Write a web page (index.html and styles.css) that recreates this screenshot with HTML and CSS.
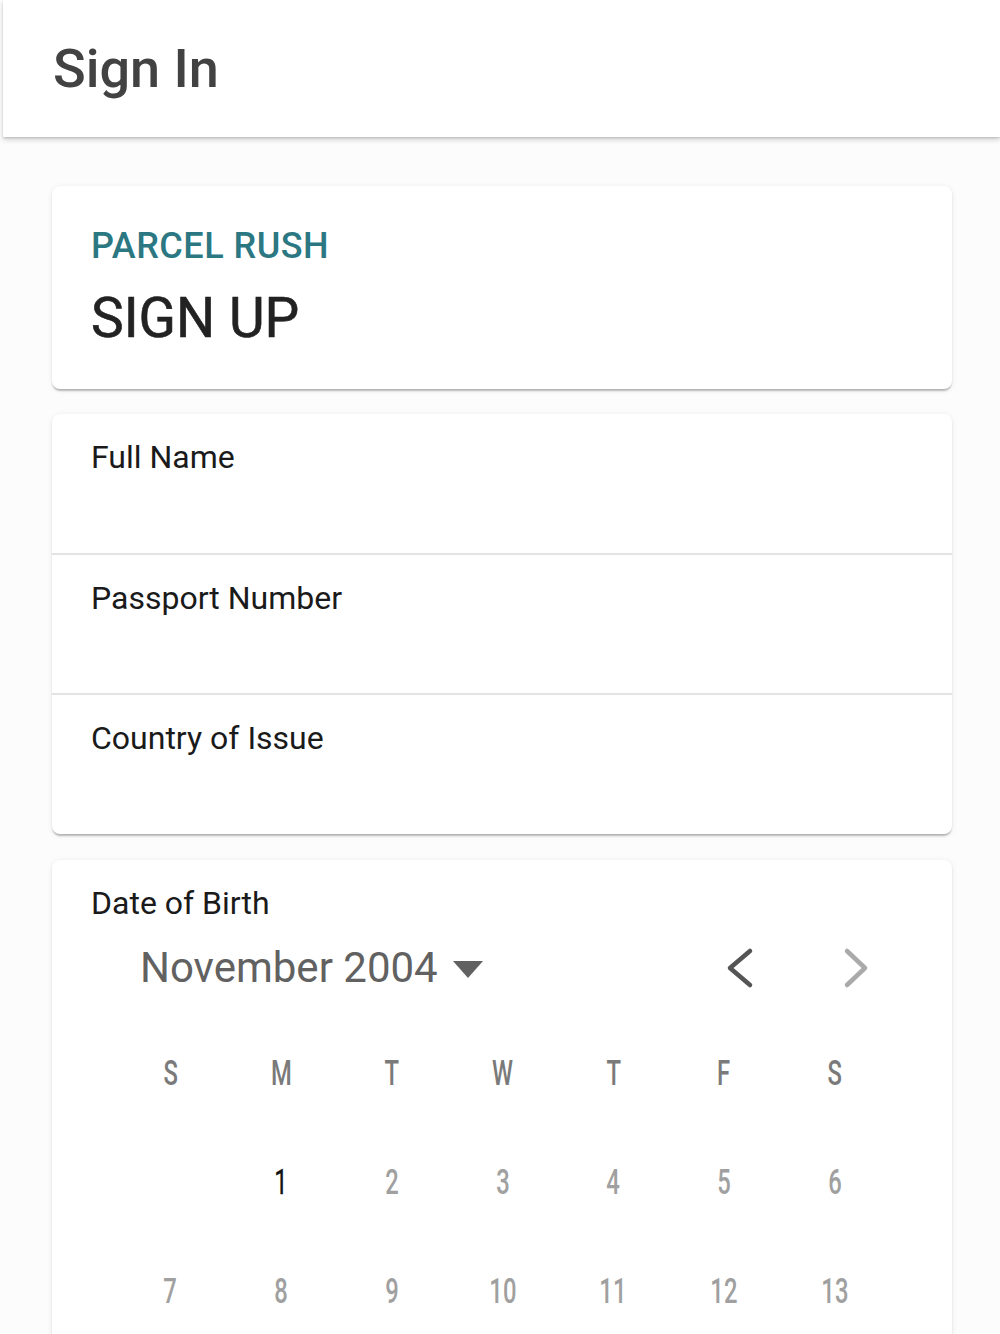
FILE: index.html
```html
<!DOCTYPE html>
<html>
<head>
<meta charset="utf-8">
<link rel="stylesheet" href="styles.css">
</head>
<body>
<header class="appbar"><h1 class="appbar-title">Sign In</h1></header>
<main class="content">
  <section class="card brand-card">
    <div class="brand">PARCEL RUSH</div>
    <div class="page-title">SIGN UP</div>
  </section>
  <section class="card fields-card">
    <div class="field">Full Name</div>
    <div class="field">Passport Number</div>
    <div class="field">Country of Issue</div>
  </section>
  <section class="card date-card">
    <div class="field-label">Date of Birth</div>
    <div class="cal-head">
      <div class="month">November 2004 <span class="caret"></span></div>
      <div class="nav">
        <button class="nav-btn">
          <svg width="48" height="48" viewBox="0 0 48 48"><polyline points="34,7 14,24 34,41" fill="none" stroke="#555" stroke-width="4.5" stroke-linecap="round" stroke-linejoin="round"/></svg>
        </button>
        <button class="nav-btn">
          <svg width="48" height="48" viewBox="0 0 48 48"><polyline points="16,7 34,24 16,41" fill="none" stroke="#aaa" stroke-width="4.5" stroke-linecap="round" stroke-linejoin="round"/></svg>
        </button>
      </div>
    </div>
    <div class="cal-grid">
      <div class="wd"><span>S</span></div><div class="wd"><span>M</span></div><div class="wd"><span>T</span></div><div class="wd"><span>W</span></div><div class="wd"><span>T</span></div><div class="wd"><span>F</span></div><div class="wd"><span>S</span></div>
      <div class="day"></div><div class="day today"><span>1</span></div><div class="day"><span>2</span></div><div class="day"><span>3</span></div><div class="day"><span>4</span></div><div class="day"><span>5</span></div><div class="day"><span>6</span></div>
      <div class="day"><span>7</span></div><div class="day"><span>8</span></div><div class="day"><span>9</span></div><div class="day"><span>10</span></div><div class="day"><span>11</span></div><div class="day"><span>12</span></div><div class="day"><span>13</span></div>
    </div>
  </section>
</main>
</body>
</html>
```

FILE: styles.css
```css
html, body {
  margin: 0;
  padding: 0;
  background: #fcfcfc;
  font-family: Roboto, "Liberation Sans", sans-serif;
  overflow: hidden;
}
.appbar {
  margin-left: 3px;
  height: 137px;
  box-sizing: border-box;
  background: #fff;
  padding: 37px 0 0 50px;
  box-shadow: 0 3px 5px rgba(0,0,0,0.16), 0 1px 2px rgba(0,0,0,0.14);
  position: relative;
  z-index: 1;
}
.appbar-title {
  margin: 0;
  font-size: 54px;
  line-height: 64px;
  font-weight: 500;
  color: #424242;
}
.content {
  padding: 49px 48px 0 52px;
  display: flex;
  flex-direction: column;
  gap: 25px;
}
.card {
  background: #fff;
  border-radius: 8px;
  box-shadow: 0 3px 2px -1px rgba(0,0,0,0.22), 0 1px 2px rgba(0,0,0,0.08), 0 1px 6px rgba(0,0,0,0.07);
}
.brand-card {
  padding: 39px 39px 38px;
  height: 203px;
  box-sizing: border-box;
}
.brand {
  font-size: 36px;
  line-height: 42px;
  color: #2b7883;
  font-weight: 500;
  letter-spacing: 0.5px;
}
.page-title {
  margin-top: 18px;
  font-size: 55px;
  line-height: 66px;
  color: #222;
  font-weight: 400;
  -webkit-text-stroke: 0.6px #222;
}
.fields-card {
  height: 420px;
  display: flex;
  flex-direction: column;
}
.field {
  height: 140px;
  box-sizing: border-box;
  padding: 24px 39px 0;
  font-size: 32px;
  line-height: 38px;
  color: #1a1a1a;
}
.field:first-child { height: 139px; }
.field + .field {
  border-top: 2px solid #e3e3e3;
}
.date-card {
  margin-top: 1px;
  padding-top: 24px;
  padding-bottom: 40px;
}
.field-label {
  padding-left: 39px;
  font-size: 32px;
  line-height: 38px;
  color: #1a1a1a;
}
.cal-head {
  display: flex;
  align-items: center;
  justify-content: space-between;
  margin-top: 21px;
  padding: 0 73px 0 88px;
  height: 50px;
}
.month {
  font-size: 42px;
  line-height: 50px;
  color: #616161;
  display: flex;
  align-items: center;
}
.caret {
  display: inline-block;
  width: 0;
  height: 0;
  margin-left: 15px;
  margin-top: 2px;
  border-left: 15px solid transparent;
  border-right: 15px solid transparent;
  border-top: 17px solid #616161;
}
.nav {
  display: flex;
  gap: 67px;
}
.nav-btn {
  width: 48px;
  height: 48px;
  padding: 0;
  border: 0;
  background: transparent;
  display: block;
}
.nav-btn svg { display: block; }
.cal-grid {
  margin-top: 26px;
  padding: 0 62px 0 63px;
  display: grid;
  grid-template-columns: repeat(7, 1fr);
  grid-auto-rows: 109px;
}
.wd, .day {
  text-align: center;
  font-size: 35px;
  line-height: 109px;
  font-weight: 500;
}
.wd span, .day span {
  display: inline-block;
  transform: scaleX(0.68);
}
.wd { color: #7a7a7a; }
.day { color: #a0a0a0; }
.day.today { color: #111; font-weight: 400; -webkit-text-stroke: 0.4px #111; }
```
